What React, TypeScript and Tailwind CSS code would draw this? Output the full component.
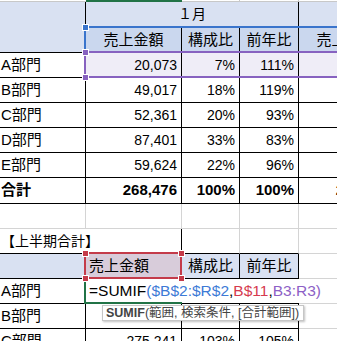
import React from 'react';

// column widths incl. right border pixel: A, B, C, D, E
const W = [86, 96, 58, 59, 96];

const blk = 'border-black';
const gry = 'border-[#d4d4d4]';

type CellProps = {
	w: number;
	children?: React.ReactNode;
	className?: string;
	align?: 'l' | 'r' | 'c';
};

function Cell({ w, children, className = '', align = 'l' }: CellProps) {
	const a = align === 'r' ? 'justify-end pr-[4px]' : align === 'c' ? 'justify-center' : 'justify-start pl-[1px]';
	return (
		<div style={{ width: w }} className={`shrink-0 h-full flex items-center whitespace-nowrap border-r border-b ${a} ${className}`}>
			{children}
		</div>
	);
}

const upper = [
	{ name: 'A部門', sales: '20,073', share: '7%', yoy: '111%', feb: '21,208' },
	{ name: 'B部門', sales: '49,017', share: '18%', yoy: '119%', feb: '47,960' },
	{ name: 'C部門', sales: '52,361', share: '20%', yoy: '93%', feb: '55,118' },
	{ name: 'D部門', sales: '87,401', share: '33%', yoy: '83%', feb: '90,322' },
	{ name: 'E部門', sales: '59,624', share: '22%', yoy: '96%', feb: '61,007' },
];

function Handle({ x, y, color }: { x: number; y: number; color: string }) {
	return (
		<div
			className={`absolute w-[7px] h-[7px] border border-white ${color}`}
			style={{ left: x - 3, top: y - 3 }}
		/>
	);
}

export default function App() {
	return (
		<div
			className="relative w-[337px] h-[341px] overflow-hidden bg-white text-black text-[14px]"
			style={{ fontFamily: '"Liberation Sans", "Noto Sans CJK JP", sans-serif' }}
		>
			{/* column header edge */}
			<div className="flex h-[2px]">
				<div className="w-[86px] shrink-0 border-b border-[#c8c8c8]" />
				<div className="w-[96px] shrink-0 bg-[#217346]" />
				<div className="w-[58px] shrink-0 border-b border-r border-[#c8c8c8]" />
				<div className="w-[59px] shrink-0 border-b border-r border-[#c8c8c8]" />
				<div className="w-[96px] shrink-0 border-b border-[#c8c8c8]" />
			</div>

			{/* upper table header (2 rows) */}
			<div className="flex h-[51px]">
				<div className={`w-[86px] shrink-0 bg-[#d9e1f2] border-r border-b ${blk}`} />
				<div className="flex flex-col">
					<div className="flex h-[26px]">
						<Cell w={213} align="c" className={`bg-[#d9e1f2] ${blk}`}>１月</Cell>
						<Cell w={96} className={`bg-[#d9e1f2] ${blk}`} />
					</div>
					<div className="flex h-[25px] text-[15px]">
						<Cell w={W[1]} align="c" className={`bg-[#cad7ee] ${blk}`}>売上金額</Cell>
						<Cell w={W[2]} align="c" className={`bg-[#cad7ee] ${blk}`}>構成比</Cell>
						<Cell w={W[3]} align="c" className={`bg-[#cad7ee] ${blk}`}>前年比</Cell>
						<Cell w={W[4]} align="c" className={`bg-[#cad7ee] ${blk}`}>売上金額</Cell>
					</div>
				</div>
			</div>

			{/* upper data */}
			{upper.map((r, i) => {
				const tint = i === 0 ? 'bg-[#efedf7]' : '';
				return (
					<div key={r.name} className="flex h-[25px]">
						<Cell w={W[0]} className={`text-[15px] ${blk}`}>{r.name}</Cell>
						<Cell w={W[1]} align="r" className={`${tint} ${blk}`}>{r.sales}</Cell>
						<Cell w={W[2]} align="r" className={`${tint} ${blk}`}>{r.share}</Cell>
						<Cell w={W[3]} align="r" className={`${tint} ${blk}`}>{r.yoy}</Cell>
						<Cell w={W[4]} align="r" className={`${tint} ${blk}`}>{r.feb}</Cell>
					</div>
				);
			})}
			<div className="flex h-[26px] font-bold text-[15px]">
				<Cell w={W[0]} className={blk}>合計</Cell>
				<Cell w={W[1]} align="r" className={blk}>268,476</Cell>
				<Cell w={W[2]} align="r" className={blk}>100%</Cell>
				<Cell w={W[3]} align="r" className={blk}>100%</Cell>
				<Cell w={W[4]} align="r" className={blk}>275,615</Cell>
			</div>

			{/* blank row */}
			<div className="flex h-[25px]">
				{W.map((w, i) => (
					<Cell key={i} w={w} className={gry} />
				))}
			</div>

			{/* section title */}
			<div className="flex h-[25px] text-[14px]">
				<Cell w={W[0] + W[1]} className={blk}>【上半期合計】</Cell>
				<Cell w={W[2]} className={`${blk} border-r-[#d4d4d4]`} />
				<Cell w={W[3]} className={`${blk} border-r-[#d4d4d4]`} />
				<Cell w={W[4]} className={gry} />
			</div>

			{/* lower header */}
			<div className="flex h-[25px] text-[15px]">
				<Cell w={W[0]} className={`bg-[#d9e1f2] ${blk}`} />
				<Cell w={W[1]} className={`bg-[#d8ccda] ${blk} pl-[3px]`}>売上金額</Cell>
				<Cell w={W[2]} align="c" className={`bg-[#d9e1f2] ${blk}`}>構成比</Cell>
				<Cell w={W[3]} align="c" className={`bg-[#d9e1f2] ${blk}`}>前年比</Cell>
				<Cell w={W[4]} className={gry} />
			</div>

			{/* editing row */}
			<div className="flex h-[25px]">
				<Cell w={W[0]} className={`text-[15px] ${blk}`}>A部門</Cell>
				<Cell w={W[1]} className={`${blk} border-r-0 pl-[3px] text-[15.5px]`}>
					<span>=SUMIF</span>
					<span className="text-[#3d7ad6]">(</span>
					<span className="text-[#3d7ad6]">$B$2:$R$2</span>
					<span>,</span>
					<span className="text-[#d63a4e]">B$11</span>
					<span>,</span>
					<span className="text-[#8d5fc6]">B3:R3</span>
					<span className="text-[#8d5fc6]">)</span>
				</Cell>
				<Cell w={W[2]} className={`${blk} border-r-0`} />
				<Cell w={W[3]} className={`${blk} border-r-0`} />
				<Cell w={W[4]} className={gry} />
			</div>

			<div className="flex h-[25px]">
				<Cell w={W[0]} className={`text-[15px] ${blk}`}>B部門</Cell>
				<Cell w={W[1]} className={blk} />
				<Cell w={W[2]} className={blk} />
				<Cell w={W[3]} className={blk} />
				<Cell w={W[4]} className={gry} />
			</div>
			<div className="flex h-[25px]">
				<Cell w={W[0]} className={`text-[15px] ${blk}`}>C部門</Cell>
				<Cell w={W[1]} align="r" className={blk}>275,241</Cell>
				<Cell w={W[2]} align="r" className={blk}>103%</Cell>
				<Cell w={W[3]} align="r" className={blk}>105%</Cell>
				<Cell w={W[4]} className={gry} />
			</div>

			{/* range highlights */}
			<div className="absolute left-[84px] top-[26px] w-[300px] h-[27px] border-2 border-[#3a74cc]" />
			<div className="absolute left-[84px] top-[51px] w-[300px] h-[27px] border-2 border-[#8762c0]" />
			<Handle x={85} y={27} color="bg-[#3a74cc]" />
			<Handle x={85} y={52} color="bg-[#8762c0]" />
			<Handle x={85} y={77} color="bg-[#8762c0]" />

			<div className="absolute left-[84px] top-[278px] w-[98px] h-[26px] border-l-2 border-b-2 border-[#217346]" />
			<div className="absolute left-[84px] top-[252px] w-[98px] h-[27px] border-2 border-[#c43b4a]" />
			<Handle x={85} y={253} color="bg-[#c43b4a]" />
			<Handle x={181} y={253} color="bg-[#c43b4a]" />
			<Handle x={85} y={278} color="bg-[#c43b4a]" />
			<Handle x={181} y={278} color="bg-[#c43b4a]" />

			{/* function tooltip */}
			<div className="absolute left-[102px] top-[305px] w-[202px] h-[16px] bg-white border border-[#c6c6c6] shadow-[1px_1px_2px_rgba(0,0,0,0.25)] flex items-center pl-[3px] text-[12.5px] text-[#444] whitespace-nowrap leading-none">
				<span className="font-bold">SUMIF</span>
				<span>(範囲, 検索条件, [合計範囲])</span>
			</div>
		</div>
	);
}
